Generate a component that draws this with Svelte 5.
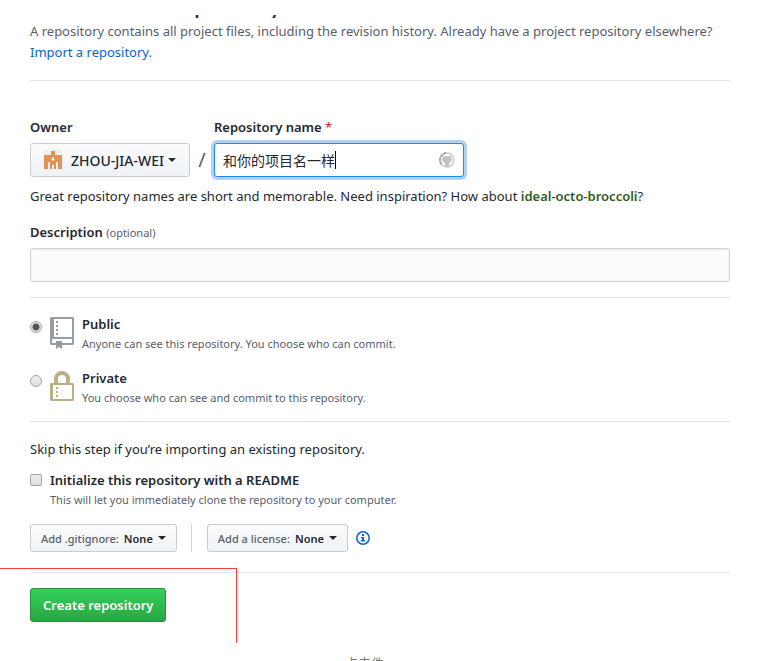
<script>
  let owner = $state('ZHOU-JIA-WEI');
  let name = $state('和你的项目名一样');
  let description = $state('');
  let visibility = $state('public');
  let readme = $state(false);
  let gitignore = $state('None');
  let license = $state('None');
</script>

<main>
  <div class="title-clip">
    <h1>Create a new repository</h1>
  </div>

  <p class="lead">
    A repository contains all project files, including the revision history. Already have a project repository elsewhere?
    <a href="#import">Import a repository.</a>
  </p>

  <form onsubmit={(e) => e.preventDefault()}>
    <div class="section identity">
      <div class="name-row">
        <div class="field">
          <label for="owner">Owner</label>
          <div class="picker owner">
            <svg class="avatar" width="20" height="20" viewBox="0 0 20 20" aria-hidden="true">
              <rect width="20" height="20" fill="#f0f0f0" />
              <path fill="#df9355" d="M8 1h4v4h7v14h-4v-7h-2v7h-2v-4H9v4H7v-7H5v7H1V5h7z" />
              <path fill="#f0f0f0" d="M10 7l2 2-2 2-2-2z" />
            </svg>
            <select id="owner" bind:value={owner}>
              <option>ZHOU-JIA-WEI</option>
            </select>
            <span class="caret"></span>
          </div>
        </div>
        <span class="slash">/</span>
        <div class="field">
          <label for="name">Repository name <span class="required">*</span></label>
          <div class="name-box">
            <input id="name" type="text" bind:value={name} />
            <span class="cursor"></span>
            <svg class="spinner" width="16" height="16" viewBox="0 0 16 16" aria-hidden="true">
              <circle cx="8" cy="8" r="7" fill="none" stroke="#ccc" stroke-width="1.5" />
              <path d="M2.5 12.5A7 7 0 0 1 8 1" fill="none" stroke="#999" stroke-width="1.5" stroke-dasharray="3 1" />
              <path fill="#c4c4c4" d="M4 3.2l2 1h4l2-1 .3 2.3c1.4 2.7.3 5-2.5 5.4l.4 1v3H5.8v-3l.4-1C3.4 10.5 2.3 8.2 3.7 5.5z" />
            </svg>
          </div>
        </div>
      </div>
      <p class="hint">
        Great repository names are short and memorable. Need inspiration? How about <strong>ideal-octo-broccoli</strong>?
      </p>
      <label for="description">Description <small>(optional)</small></label>
      <input id="description" type="text" bind:value={description} />
    </div>

    <div class="section visibility">
      <label class="choice">
        <input type="radio" name="visibility" value="public" bind:group={visibility} />
        <svg width="24" height="32" viewBox="0 0 24 32" aria-hidden="true">
          <path fill="#959da5" fill-rule="evenodd" d="M1 0h22l1 1v26l-1 1H12v4l-3-2-3 2v-4H1l-1-1V1zM4 2v18h18V2zM2 22v4h4v-2h6v2h10v-4z" />
          <path fill="#959da5" d="M6 4h2v2H6zM6 8h2v2H6zM6 12h2v2H6zM6 16h2v2H6z" />
        </svg>
        <span class="choice-text">
          <b>Public</b>
          <span class="note">Anyone can see this repository. You choose who can commit.</span>
        </span>
      </label>
      <label class="choice">
        <input type="radio" name="visibility" value="private" bind:group={visibility} />
        <svg width="24" height="32" viewBox="0 0 24 32" aria-hidden="true">
          <path fill="none" stroke="#bcae85" stroke-width="4" d="M6 14V8a6 6 0 0 1 12 0v6" />
          <path fill="#bcae85" fill-rule="evenodd" d="M1 12h22l1 1v16l-1 1H1l-1-1V13zM3 14v14h19V14z" />
          <path fill="#bcae85" d="M6 16h2v2H6zM6 20h2v2H6zM6 24h2v2H6z" />
        </svg>
        <span class="choice-text">
          <b>Private</b>
          <span class="note">You choose who can see and commit to this repository.</span>
        </span>
      </label>
    </div>

    <div class="section setup">
      <p>Skip this step if you’re importing an existing repository.</p>
      <label class="readme">
        <input type="checkbox" bind:checked={readme} />
        <span class="choice-text">
          <b>Initialize this repository with a README</b>
          <span class="note">This will let you immediately clone the repository to your computer.</span>
        </span>
      </label>
      <div class="templates">
        <div class="picker small">
          <label for="gitignore">Add .gitignore:</label>
          <select id="gitignore" bind:value={gitignore}>
            <option>None</option>
          </select>
          <span class="caret"></span>
        </div>
        <span class="divider"></span>
        <div class="picker small">
          <label for="license">Add a license:</label>
          <select id="license" bind:value={license}>
            <option>None</option>
          </select>
          <span class="caret"></span>
        </div>
        <svg class="info" width="14" height="14" viewBox="0 0 14 14" aria-hidden="true">
          <circle cx="7" cy="7" r="6.2" fill="none" stroke="#0366d6" stroke-width="1.5" />
          <path fill="#0366d6" d="M6 3h2v2H6zM5 6h3v3h1v1.5H5V9h1V7H5z" />
        </svg>
      </div>
    </div>

    <div class="section submit">
      <button type="submit">Create repository</button>
    </div>
  </form>

  <div class="marker"></div>
  <div class="caption-clip">点击件</div>
</main>

<style>
  :global(body) {
    margin: 0;
    background: #fff;
  }

  main {
    position: relative;
    padding: 15px 33px 0 30px;
    color: #24292e;
    font-family: 'Noto Sans', 'Noto Sans CJK SC', sans-serif;
    font-size: 13px;
    line-height: 21px;
  }

  main :global(*) {
    box-sizing: border-box;
  }

  h1,
  p {
    margin: 0;
  }

  b,
  strong {
    font-weight: 600;
  }

  .title-clip {
    display: flex;
    align-items: flex-end;
    height: 3px;
    overflow: hidden;
  }

  h1 {
    font-size: 22px;
    font-weight: 500;
    line-height: 24px;
  }

  .lead {
    padding: 3px 0 17px;
    color: #586069;
  }

  .lead a {
    color: #0366d6;
    text-decoration: none;
  }

  .section {
    border-top: 1px solid #e1e4e8;
  }

  .identity {
    padding: 36px 0 15px;
  }

  .identity label {
    display: block;
    font-weight: 600;
  }

  .name-row {
    display: flex;
    align-items: flex-end;
  }

  .field label {
    margin-bottom: 5px;
  }

  .required {
    color: #cb2431;
    font-weight: 400;
  }

  .slash {
    width: 24px;
    font-size: 20px;
    line-height: 34px;
    text-align: center;
    color: #586069;
  }

  .picker {
    display: flex;
    align-items: center;
    border: 1px solid #c8cbcf;
    border-radius: 3px;
    background: linear-gradient(#fafbfc, #eff3f6);
  }

  .picker select {
    appearance: none;
    padding: 0;
    border: 0;
    background: none;
    color: #24292e;
    font: inherit;
    font-weight: 600;
  }

  .owner {
    width: 160px;
    height: 34px;
    padding: 0 12px;
  }

  .owner select {
    font-size: 14px;
    font-weight: 500;
  }

  .avatar {
    margin-right: 8px;
  }

  .caret {
    margin-left: 4px;
    border: 4px solid transparent;
    border-top-color: #24292e;
    border-bottom: 0;
  }

  input[type='text'] {
    width: 100%;
    height: 34px;
    padding: 0 8px;
    border: 1px solid #d1d5da;
    border-radius: 3px;
    background: #fafbfc;
    box-shadow: inset 0 1px 2px rgba(27, 31, 35, 0.075);
    color: #24292e;
    font: inherit;
    outline: none;
  }

  .name-box {
    position: relative;
    width: 250px;
  }

  .name-box input[type='text'] {
    display: block;
    border-color: #2188ff;
    background: #fff;
    box-shadow: 0 0 0 3px rgba(3, 102, 214, 0.3);
    font-size: 14px;
  }

  .cursor {
    position: absolute;
    top: 8px;
    left: 121px;
    width: 1px;
    height: 18px;
    background: #000;
  }

  .spinner {
    position: absolute;
    top: 9px;
    right: 9px;
  }

  .hint {
    padding: 9px 0 15px;
  }

  .hint strong {
    color: #2f5c1f;
  }

  small {
    color: #586069;
    font-size: 11px;
    font-weight: 400;
  }

  #description {
    display: block;
    margin-top: 5px;
  }

  .visibility {
    padding: 16px 0 14px;
    display: grid;
    gap: 15px;
  }

  .choice,
  .readme {
    display: flex;
    align-items: flex-start;
  }

  .choice svg {
    margin: 3px 8px 0;
  }

  input[type='radio'],
  input[type='checkbox'] {
    appearance: none;
    width: 12px;
    height: 12px;
    margin: 7px 0 0;
    border: 1px solid #a5a5a5;
    border-radius: 2px;
    background: linear-gradient(#eee, #ddd);
  }

  input[type='radio'] {
    border-radius: 50%;
  }

  input[type='radio']:checked {
    background: radial-gradient(circle, #555 0 3px, #e6e6e6 4px);
  }

  .choice-text {
    display: flex;
    flex-direction: column;
  }

  .note {
    color: #586069;
    font-size: 11px;
    line-height: 18px;
  }

  .setup {
    padding: 17px 0 20px;
  }

  .readme {
    margin-top: 10px;
  }

  .readme input[type='checkbox'] {
    margin: 4px 8px 0 0;
  }

  .templates {
    display: flex;
    align-items: center;
    margin-top: 15px;
  }

  .small {
    height: 28px;
    padding: 0 10px;
    font-size: 11px;
  }

  .small label {
    margin-right: 5px;
    color: #586069;
    font-weight: 500;
  }

  .small .caret {
    margin-left: 5px;
  }

  .divider {
    height: 28px;
    margin: 0 15px 0 14px;
    border-left: 1px solid #d1d5da;
  }

  .info {
    margin-left: 8px;
  }

  .submit {
    padding-top: 15px;
  }

  .submit button {
    height: 34px;
    padding: 0 12px;
    border: 1px solid #26903e;
    border-radius: 3px;
    background: linear-gradient(#34d058, #28a745);
    color: #fff;
    font: inherit;
    font-weight: 600;
  }

  .marker {
    position: absolute;
    top: 568px;
    left: 0;
    width: 237px;
    height: 75px;
    border: solid #ff3b3b;
    border-width: 1px 1px 0 0;
    pointer-events: none;
  }

  .caption-clip {
    height: 5px;
    margin-top: 34px;
    padding-left: 315px;
    overflow: hidden;
    color: #777;
    font-size: 13px;
    line-height: 15px;
  }
</style>
